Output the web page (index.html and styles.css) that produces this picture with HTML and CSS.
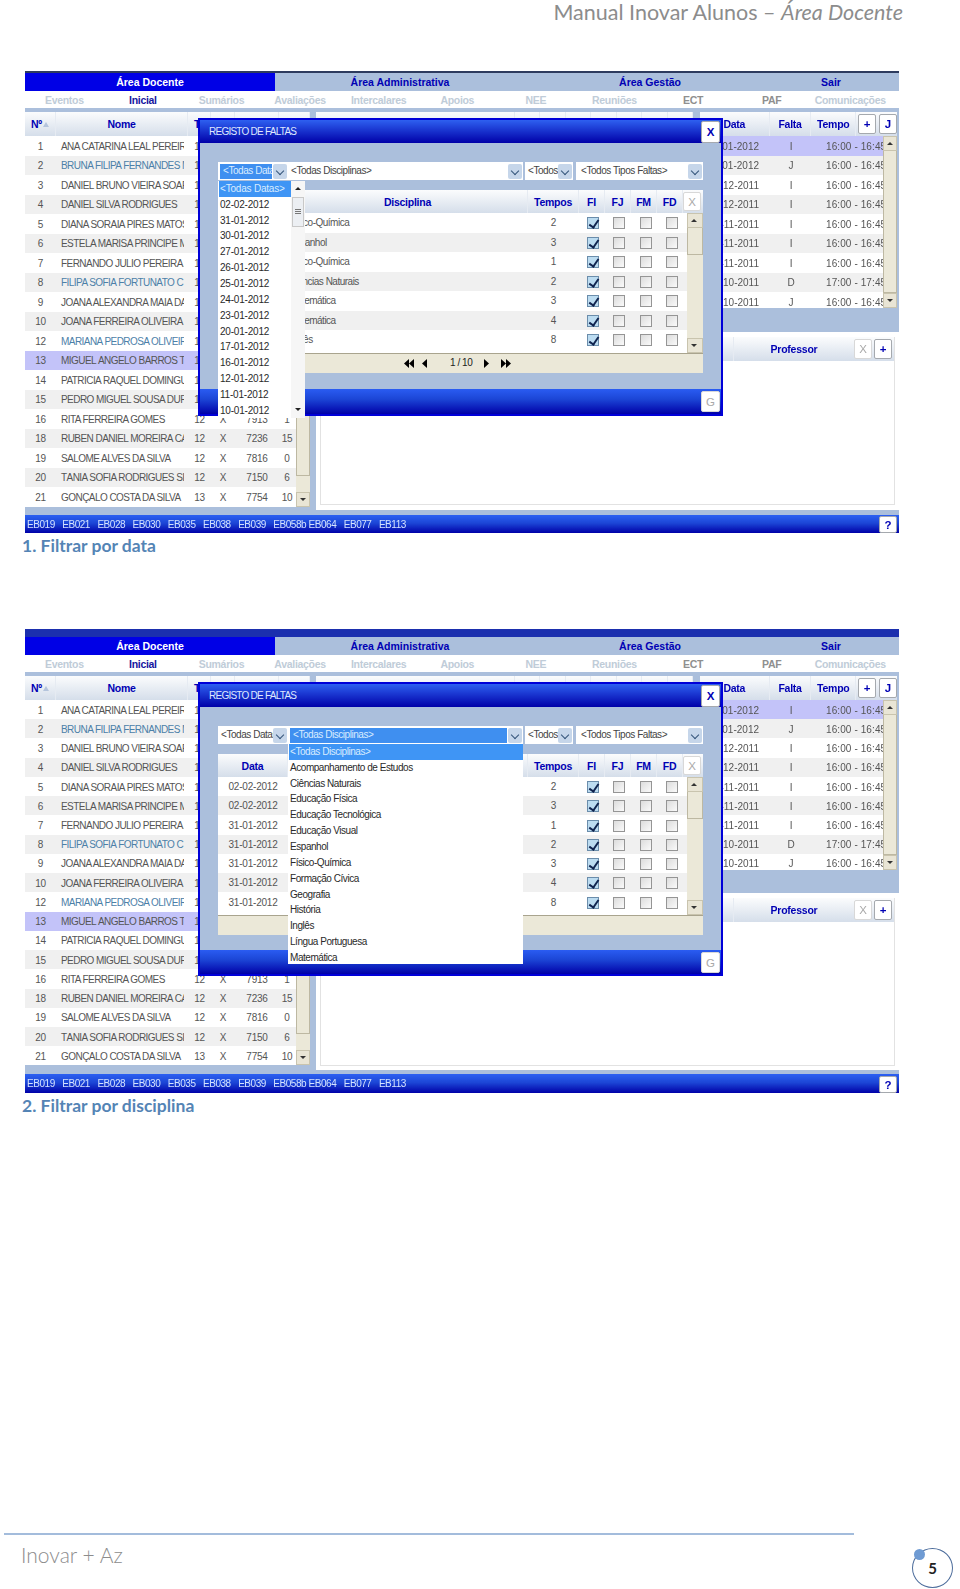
FILE: index.html
```html
<!DOCTYPE html>
<html lang="pt">
<head>
    <meta charset="UTF-8">
    <title>Manual Inovar Alunos - Área Docente</title>
    <link rel="stylesheet" href="styles.css">
</head>
<body>
<div class="page">
    <header class="doc-title">Manual Inovar Alunos – <em>Área Docente</em></header>

    <div class="app">
        <div class="strip"></div>
        <nav class="tabs"><a class="active">Área Docente</a><a>Área Administrativa</a><a>Área Gestão</a><a>Sair</a></nav>
        <nav class="submenu"><a>Eventos</a><a class="current">Inicial</a><a>Sumários</a><a>Avaliações</a><a>Intercalares</a><a>Apoios</a><a>NEE</a><a>Reuniões</a><a class="plain">ECT</a><a class="plain">PAF</a><a>Comunicações</a></nav>
        <div class="panels">
            <section class="students">
                <div class="head student-cols"><span>Nº<i class="sort"></i></span><span>Nome</span><span class="cut">Tu</span><span></span><span></span><span></span></div>
                <div class="scroll-area">
                    <div class="rows">
                        <div class="row student-cols"><span>1</span><span class="name">ANA CATARINA LEAL PEREIR</span><span>12</span></div>
                        <div class="row student-cols link"><span>2</span><span class="name">BRUNA FILIPA FERNANDES M</span><span>12</span></div>
                        <div class="row student-cols"><span>3</span><span class="name">DANIEL BRUNO VIEIRA SOAR</span><span>12</span></div>
                        <div class="row student-cols"><span>4</span><span class="name">DANIEL SILVA RODRIGUES</span><span>12</span></div>
                        <div class="row student-cols"><span>5</span><span class="name">DIANA SORAIA PIRES MATOS</span><span>12</span></div>
                        <div class="row student-cols"><span>6</span><span class="name">ESTELA MARISA PRÍNCIPE M</span><span>12</span></div>
                        <div class="row student-cols"><span>7</span><span class="name">FERNANDO JÚLIO PEREIRA A</span><span>12</span></div>
                        <div class="row student-cols link"><span>8</span><span class="name">FILIPA SOFIA FORTUNATO C</span><span>12</span></div>
                        <div class="row student-cols"><span>9</span><span class="name">JOANA ALEXANDRA MAIA DA</span><span>12</span></div>
                        <div class="row student-cols"><span>10</span><span class="name">JOANA FERREIRA OLIVEIRA</span><span>12</span></div>
                        <div class="row student-cols link"><span>12</span><span class="name">MARIANA PEDROSA OLIVEIR</span><span>12</span></div>
                        <div class="row student-cols selected"><span>13</span><span class="name">MIGUEL ÂNGELO BARROS TE</span><span>12</span></div>
                        <div class="row student-cols"><span>14</span><span class="name">PATRÍCIA RAQUEL DOMINGU</span><span>12</span></div>
                        <div class="row student-cols"><span>15</span><span class="name">PEDRO MIGUEL SOUSA DURÃ</span><span>12</span></div>
                        <div class="row student-cols"><span>16</span><span class="name">RITA FERREIRA GOMES</span><span>12</span><span>X</span><span>7913</span><span>1</span></div>
                        <div class="row student-cols"><span>18</span><span class="name">RUBEN DANIEL MOREIRA CAI</span><span>12</span><span>X</span><span>7236</span><span>15</span></div>
                        <div class="row student-cols"><span>19</span><span class="name">SALOMÉ ALVES DA SILVA</span><span>12</span><span>X</span><span>7816</span><span>0</span></div>
                        <div class="row student-cols"><span>20</span><span class="name">TÂNIA SOFIA RODRIGUES SI</span><span>12</span><span>X</span><span>7150</span><span>6</span></div>
                        <div class="row student-cols"><span>21</span><span class="name">GONÇALO COSTA DA SILVA</span><span>13</span><span>X</span><span>7754</span><span>10</span></div>
                    </div>
                    <div class="scrollbar"><i class="btn-up"></i><i class="thumb grow"></i><i class="track-gap"></i><i class="btn-down"></i></div>
                </div>
            </section>
            <section class="work">
                <div class="upper">
                    <div class="middle">
                        <div class="head mid-head"><span class="wide"></span><span></span><span></span><span></span><span></span><span></span><span></span><span></span></div>
                    </div>
                    <div class="absences">
                        <div class="head absence-head">
                            <span class="col-data">Data</span><span class="col-falta">Falta</span><span class="col-tempo">Tempo</span>
                            <button class="key">+</button><button class="key">J</button>
                        </div>
                        <div class="scroll-area">
                            <div class="rows">
                                <div class="row absence-cols selected"><span>-01-2012</span><span>I</span><span>16:00 - 16:45</span></div>
                                <div class="row absence-cols"><span>-01-2012</span><span>J</span><span>16:00 - 16:45</span></div>
                                <div class="row absence-cols"><span>-12-2011</span><span>I</span><span>16:00 - 16:45</span></div>
                                <div class="row absence-cols"><span>-12-2011</span><span>I</span><span>16:00 - 16:45</span></div>
                                <div class="row absence-cols"><span>-11-2011</span><span>I</span><span>16:00 - 16:45</span></div>
                                <div class="row absence-cols"><span>-11-2011</span><span>I</span><span>16:00 - 16:45</span></div>
                                <div class="row absence-cols"><span>-11-2011</span><span>I</span><span>16:00 - 16:45</span></div>
                                <div class="row absence-cols"><span>-10-2011</span><span>D</span><span>17:00 - 17:45</span></div>
                                <div class="row absence-cols"><span>-10-2011</span><span>J</span><span>16:00 - 16:45</span></div>
                            </div>
                            <div class="scrollbar"><i class="btn-up"></i><i class="thumb grow"></i><i class="btn-down"></i></div>
                        </div>
                    </div>
                </div>
                <div class="lower">
                    <div class="lower-inner">
                        <div class="head lower-head"><span class="wide"></span><span class="col-prof">Professor</span><button class="key off">X</button><button class="key">+</button></div>
                    </div>
                </div>
            </section>
        </div>
        <footer class="statusbar">
            <span>EB019</span><span>EB021</span><span>EB028</span><span>EB030</span><span>EB035</span><span>EB038</span><span>EB039</span><span>EB058b</span><span>EB064</span><span>EB077</span><span>EB113</span>
            <button class="key help">?</button>
        </footer>

        <div class="modal">
            <div class="modal-title"><span>REGISTO DE FALTAS</span><button class="key close">X</button></div>
            <div class="modal-body">
                <div class="filters">
                    <div class="select s-date"><span class="val focus">&lt;Todas Datas&gt;</span><i class="arrow"></i></div>
                    <div class="select s-disc"><span class="val">&lt;Todas Disciplinas&gt;</span><i class="arrow"></i></div>
                    <div class="select s-time"><span class="val">&lt;Todos&gt;</span><i class="arrow"></i></div>
                    <div class="select s-type"><span class="val">&lt;Todos Tipos Faltas&gt;</span><i class="arrow"></i></div>
                </div>
                <div class="head modal-cols"><span>Data</span><span>Disciplina</span><span>Tempos</span><span>FI</span><span>FJ</span><span>FM</span><span>FD</span><button class="key off">X</button></div>
                <div class="scroll-area modal-scroll">
                    <div class="rows">
                        <div class="row modal-cols"><span>02-02-2012</span><span class="subject">Físico-Química</span><span>2</span><span><i class="cb on"></i></span><span><i class="cb"></i></span><span><i class="cb"></i></span><span><i class="cb"></i></span></div>
                        <div class="row modal-cols"><span>02-02-2012</span><span class="subject">Espanhol</span><span>3</span><span><i class="cb on"></i></span><span><i class="cb"></i></span><span><i class="cb"></i></span><span><i class="cb"></i></span></div>
                        <div class="row modal-cols"><span>31-01-2012</span><span class="subject">Físico-Química</span><span>1</span><span><i class="cb on"></i></span><span><i class="cb"></i></span><span><i class="cb"></i></span><span><i class="cb"></i></span></div>
                        <div class="row modal-cols"><span>31-01-2012</span><span class="subject">Ciências Naturais</span><span>2</span><span><i class="cb on"></i></span><span><i class="cb"></i></span><span><i class="cb"></i></span><span><i class="cb"></i></span></div>
                        <div class="row modal-cols"><span>31-01-2012</span><span class="subject">Matemática</span><span>3</span><span><i class="cb on"></i></span><span><i class="cb"></i></span><span><i class="cb"></i></span><span><i class="cb"></i></span></div>
                        <div class="row modal-cols"><span>31-01-2012</span><span class="subject">Matemática</span><span>4</span><span><i class="cb on"></i></span><span><i class="cb"></i></span><span><i class="cb"></i></span><span><i class="cb"></i></span></div>
                        <div class="row modal-cols"><span>31-01-2012</span><span class="subject">Inglês</span><span>8</span><span><i class="cb on"></i></span><span><i class="cb"></i></span><span><i class="cb"></i></span><span><i class="cb"></i></span></div>
                    </div>
                    <div class="scrollbar"><i class="btn-up"></i><i class="thumb short"></i><i class="track-fill"></i><i class="btn-down"></i></div>
                </div>
                <div class="pager">
                    <svg width="10" height="9" viewBox="0 0 10 9"><path d="M5 0v9L0 4.5zM10 0v9L5 4.5z"/></svg>
                    <svg class="gap-s" width="5" height="9" viewBox="0 0 5 9"><path d="M5 0v9L0 4.5z"/></svg>
                    <b>1 / 10</b>
                    <svg width="5" height="9" viewBox="0 0 5 9"><path d="M0 0v9l5-4.5z"/></svg>
                    <svg class="gap-l" width="10" height="9" viewBox="0 0 10 9"><path d="M0 0v9l5-4.5zM5 0v9l5-4.5z"/></svg>
                </div>
            </div>
            <div class="modal-foot"><button class="key off">G</button></div>
            <div class="dropdown dates">
                <div class="list">
                    <a class="sel">&lt;Todas Datas&gt;</a><a>02-02-2012</a><a>31-01-2012</a><a>30-01-2012</a><a>27-01-2012</a><a>26-01-2012</a><a>25-01-2012</a><a>24-01-2012</a><a>23-01-2012</a><a>20-01-2012</a><a>17-01-2012</a><a>16-01-2012</a><a>12-01-2012</a><a>11-01-2012</a><a>10-01-2012</a>
                </div>
                <div class="mini-scroll"><i class="mini-up"></i><i class="mini-thumb"></i><i class="mini-down"></i></div>
            </div>
        </div>
    </div>
    <p class="caption">1. Filtrar por data</p>

    <div class="app app-2">
        <div class="strip"></div>
        <nav class="tabs"><a class="active">Área Docente</a><a>Área Administrativa</a><a>Área Gestão</a><a>Sair</a></nav>
        <nav class="submenu"><a>Eventos</a><a class="current">Inicial</a><a>Sumários</a><a>Avaliações</a><a>Intercalares</a><a>Apoios</a><a>NEE</a><a>Reuniões</a><a class="plain">ECT</a><a class="plain">PAF</a><a>Comunicações</a></nav>
        <div class="panels">
            <section class="students">
                <div class="head student-cols"><span>Nº<i class="sort"></i></span><span>Nome</span><span class="cut">Tu</span><span></span><span></span><span></span></div>
                <div class="scroll-area">
                    <div class="rows">
                        <div class="row student-cols"><span>1</span><span class="name">ANA CATARINA LEAL PEREIR</span><span>12</span></div>
                        <div class="row student-cols link"><span>2</span><span class="name">BRUNA FILIPA FERNANDES M</span><span>12</span></div>
                        <div class="row student-cols"><span>3</span><span class="name">DANIEL BRUNO VIEIRA SOAR</span><span>12</span></div>
                        <div class="row student-cols"><span>4</span><span class="name">DANIEL SILVA RODRIGUES</span><span>12</span></div>
                        <div class="row student-cols"><span>5</span><span class="name">DIANA SORAIA PIRES MATOS</span><span>12</span></div>
                        <div class="row student-cols"><span>6</span><span class="name">ESTELA MARISA PRÍNCIPE M</span><span>12</span></div>
                        <div class="row student-cols"><span>7</span><span class="name">FERNANDO JÚLIO PEREIRA A</span><span>12</span></div>
                        <div class="row student-cols link"><span>8</span><span class="name">FILIPA SOFIA FORTUNATO C</span><span>12</span></div>
                        <div class="row student-cols"><span>9</span><span class="name">JOANA ALEXANDRA MAIA DA</span><span>12</span></div>
                        <div class="row student-cols"><span>10</span><span class="name">JOANA FERREIRA OLIVEIRA</span><span>12</span></div>
                        <div class="row student-cols link"><span>12</span><span class="name">MARIANA PEDROSA OLIVEIR</span><span>12</span></div>
                        <div class="row student-cols selected"><span>13</span><span class="name">MIGUEL ÂNGELO BARROS TE</span><span>12</span></div>
                        <div class="row student-cols"><span>14</span><span class="name">PATRÍCIA RAQUEL DOMINGU</span><span>12</span></div>
                        <div class="row student-cols"><span>15</span><span class="name">PEDRO MIGUEL SOUSA DURÃ</span><span>12</span></div>
                        <div class="row student-cols"><span>16</span><span class="name">RITA FERREIRA GOMES</span><span>12</span><span>X</span><span>7913</span><span>1</span></div>
                        <div class="row student-cols"><span>18</span><span class="name">RUBEN DANIEL MOREIRA CAI</span><span>12</span><span>X</span><span>7236</span><span>15</span></div>
                        <div class="row student-cols"><span>19</span><span class="name">SALOMÉ ALVES DA SILVA</span><span>12</span><span>X</span><span>7816</span><span>0</span></div>
                        <div class="row student-cols"><span>20</span><span class="name">TÂNIA SOFIA RODRIGUES SI</span><span>12</span><span>X</span><span>7150</span><span>6</span></div>
                        <div class="row student-cols"><span>21</span><span class="name">GONÇALO COSTA DA SILVA</span><span>13</span><span>X</span><span>7754</span><span>10</span></div>
                    </div>
                    <div class="scrollbar"><i class="btn-up"></i><i class="thumb grow"></i><i class="track-gap"></i><i class="btn-down"></i></div>
                </div>
            </section>
            <section class="work">
                <div class="upper">
                    <div class="middle">
                        <div class="head mid-head"><span class="wide"></span><span></span><span></span><span></span><span></span><span></span><span></span><span></span></div>
                    </div>
                    <div class="absences">
                        <div class="head absence-head">
                            <span class="col-data">Data</span><span class="col-falta">Falta</span><span class="col-tempo">Tempo</span>
                            <button class="key">+</button><button class="key">J</button>
                        </div>
                        <div class="scroll-area">
                            <div class="rows">
                                <div class="row absence-cols selected"><span>-01-2012</span><span>I</span><span>16:00 - 16:45</span></div>
                                <div class="row absence-cols"><span>-01-2012</span><span>J</span><span>16:00 - 16:45</span></div>
                                <div class="row absence-cols"><span>-12-2011</span><span>I</span><span>16:00 - 16:45</span></div>
                                <div class="row absence-cols"><span>-12-2011</span><span>I</span><span>16:00 - 16:45</span></div>
                                <div class="row absence-cols"><span>-11-2011</span><span>I</span><span>16:00 - 16:45</span></div>
                                <div class="row absence-cols"><span>-11-2011</span><span>I</span><span>16:00 - 16:45</span></div>
                                <div class="row absence-cols"><span>-11-2011</span><span>I</span><span>16:00 - 16:45</span></div>
                                <div class="row absence-cols"><span>-10-2011</span><span>D</span><span>17:00 - 17:45</span></div>
                                <div class="row absence-cols"><span>-10-2011</span><span>J</span><span>16:00 - 16:45</span></div>
                            </div>
                            <div class="scrollbar"><i class="btn-up"></i><i class="thumb grow"></i><i class="btn-down"></i></div>
                        </div>
                    </div>
                </div>
                <div class="lower">
                    <div class="lower-inner">
                        <div class="head lower-head"><span class="wide"></span><span class="col-prof">Professor</span><button class="key off">X</button><button class="key">+</button></div>
                    </div>
                </div>
            </section>
        </div>
        <footer class="statusbar">
            <span>EB019</span><span>EB021</span><span>EB028</span><span>EB030</span><span>EB035</span><span>EB038</span><span>EB039</span><span>EB058b</span><span>EB064</span><span>EB077</span><span>EB113</span>
            <button class="key help">?</button>
        </footer>

        <div class="modal">
            <div class="modal-title"><span>REGISTO DE FALTAS</span><button class="key close">X</button></div>
            <div class="modal-body">
                <div class="filters">
                    <div class="select s-date"><span class="val">&lt;Todas Datas&gt;</span><i class="arrow"></i></div>
                    <div class="select s-disc"><span class="val focus">&lt;Todas Disciplinas&gt;</span><i class="arrow"></i></div>
                    <div class="select s-time"><span class="val">&lt;Todos&gt;</span><i class="arrow"></i></div>
                    <div class="select s-type"><span class="val">&lt;Todos Tipos Faltas&gt;</span><i class="arrow"></i></div>
                </div>
                <div class="head modal-cols"><span>Data</span><span>Disciplina</span><span>Tempos</span><span>FI</span><span>FJ</span><span>FM</span><span>FD</span><button class="key off">X</button></div>
                <div class="scroll-area modal-scroll">
                    <div class="rows">
                        <div class="row modal-cols"><span>02-02-2012</span><span class="subject">Físico-Química</span><span>2</span><span><i class="cb on"></i></span><span><i class="cb"></i></span><span><i class="cb"></i></span><span><i class="cb"></i></span></div>
                        <div class="row modal-cols"><span>02-02-2012</span><span class="subject">Espanhol</span><span>3</span><span><i class="cb on"></i></span><span><i class="cb"></i></span><span><i class="cb"></i></span><span><i class="cb"></i></span></div>
                        <div class="row modal-cols"><span>31-01-2012</span><span class="subject">Físico-Química</span><span>1</span><span><i class="cb on"></i></span><span><i class="cb"></i></span><span><i class="cb"></i></span><span><i class="cb"></i></span></div>
                        <div class="row modal-cols"><span>31-01-2012</span><span class="subject">Ciências Naturais</span><span>2</span><span><i class="cb on"></i></span><span><i class="cb"></i></span><span><i class="cb"></i></span><span><i class="cb"></i></span></div>
                        <div class="row modal-cols"><span>31-01-2012</span><span class="subject">Matemática</span><span>3</span><span><i class="cb on"></i></span><span><i class="cb"></i></span><span><i class="cb"></i></span><span><i class="cb"></i></span></div>
                        <div class="row modal-cols"><span>31-01-2012</span><span class="subject">Matemática</span><span>4</span><span><i class="cb on"></i></span><span><i class="cb"></i></span><span><i class="cb"></i></span><span><i class="cb"></i></span></div>
                        <div class="row modal-cols"><span>31-01-2012</span><span class="subject">Inglês</span><span>8</span><span><i class="cb on"></i></span><span><i class="cb"></i></span><span><i class="cb"></i></span><span><i class="cb"></i></span></div>
                    </div>
                    <div class="scrollbar"><i class="btn-up"></i><i class="thumb short"></i><i class="track-fill"></i><i class="btn-down"></i></div>
                </div>
                <div class="pager"></div>
            </div>
            <div class="modal-foot"><button class="key off">G</button></div>
            <div class="dropdown subjects">
                <div class="list">
                    <a class="sel">&lt;Todas Disciplinas&gt;</a><a>Acompanhamento de Estudos</a><a>Ciências Naturais</a><a>Educação Física</a><a>Educação Tecnológica</a><a>Educação Visual</a><a>Espanhol</a><a>Físico-Química</a><a>Formação Cívica</a><a>Geografia</a><a>História</a><a>Inglês</a><a>Língua Portuguesa</a><a>Matemática</a>
                </div>
            </div>
        </div>
    </div>
    <p class="caption">2. Filtrar por disciplina</p>

    <footer class="doc-foot">
        <span class="brand">Inovar + Az</span>
        <div class="page-no"><i class="dot"></i>5</div>
    </footer>
</div>
</body>
</html>
```

FILE: styles.css
```css
:root {
    --ui: "Liberation Sans", Arial, sans-serif;
    --doc: Lato, "Open Sans", sans-serif;
    --steel: #abbfdc;
    --navy: #0000b4;
    --beige: #ebe8d8;
}

* {
    margin: 0;
    padding: 0;
    box-sizing: border-box;
}

body {
    background: white;
}

.page {
    position: relative;
    height: 1589px;
    display: flex;
    flex-direction: column;
    font-family: var(--doc);
}

.doc-title {
    height: 71px;
    padding-right: 57px;
    text-align: right;
    font-size: 21.5px;
    line-height: 25px;
    color: #8c8c8c;
}

.caption {
    margin-left: 22px;
    height: 26px;
    line-height: 26px;
    font-size: 17.5px;
    font-weight: 700;
    color: #5484b5;
}

.doc-foot {
    margin-top: auto;
    margin-left: 4px;
    width: 850px;
    height: 56px;
    border-top: 2px solid #a3bcdc;
    padding: 7px 0 0 17px;
    position: relative;
}

.brand {
    font-size: 21px;
    font-weight: 300;
    color: #8c8c8c;
}

.page-no {
    position: absolute;
    left: 908px;
    top: 13px;
    width: 41px;
    height: 40px;
    border: 1px solid #4d6d9c;
    border-radius: 50%;
    display: flex;
    align-items: center;
    justify-content: center;
    font: 700 15px var(--doc);
    color: #222;
}

.dot {
    position: absolute;
    left: 1px;
    top: 0;
    width: 11px;
    height: 11px;
    border-radius: 50%;
    background: #6f9bd3;
}

/* the application screenshot */

.app {
    --row: 19.5px;
    --absence-body: 172px;
    position: relative;
    margin-left: 25px;
    width: 874px;
    height: 462px;
    display: flex;
    flex-direction: column;
    font: 10px/1 var(--ui);
    letter-spacing: -0.45px;
    color: #555;
    background: var(--steel);
    filter: blur(0.35px);
}

.app-2 {
    --row: 19.24px;
    --absence-body: 170px;
    margin-top: 70px;
    height: 464px;
}

.strip {
    height: 2px;
    background: #2d3b5e;
}

.app-2 .strip {
    height: 8px;
    background: #1b2fae;
}

.tabs {
    height: 18px;
    display: grid;
    grid-template-columns: 250px 250px 250px 112px;
    align-items: stretch;
    background: var(--steel);
    font-size: 10.5px;
    font-weight: 700;
    letter-spacing: 0;
    color: var(--navy);
}

.tabs a {
    display: flex;
    align-items: center;
    justify-content: center;
    padding-top: 1px;
}

.tabs .active {
    background: #0000e6;
    color: white;
}

.submenu {
    height: 17px;
    display: grid;
    grid-template-columns: repeat(11, 78.6px);
    background: white;
    font-size: 10.5px;
    font-weight: 700;
    letter-spacing: -0.3px;
    color: #c0ccd8;
}

.submenu a {
    display: flex;
    align-items: center;
    justify-content: center;
    padding-top: 1px;
}

.submenu .current {
    color: #1616a0;
}

.submenu .plain {
    color: #8f8f8f;
}

.panels {
    flex: 1;
    margin-top: 4px;
    display: grid;
    grid-template-columns: 285px 1fr;
    column-gap: 6px;
    min-height: 0;
}

.head {
    height: 24px;
    background: linear-gradient(#fbfcfd, #d5deea);
    color: var(--navy);
    font-size: 10.5px;
    font-weight: 700;
    letter-spacing: -0.25px;
    align-items: center;
}

.head > span {
    height: 100%;
    padding-top: 1px;
    display: flex;
    align-items: center;
    justify-content: center;
    border-right: 1px solid #e6ebf2;
}

.scroll-area {
    display: flex;
}

.rows {
    flex: 1;
    min-width: 0;
}

.row {
    height: var(--row);
    align-items: center;
    padding-top: 2px;
    background: white;
    overflow: hidden;
}

.modal-body .row {
    padding-top: 1px;
}

.row:nth-child(even) {
    background: #f0f0f0;
}

.row.selected {
    background: #c3c3f9;
}

.row.link .name {
    color: #4c80a8;
}

.row > span {
    text-align: center;
    white-space: nowrap;
    letter-spacing: -0.2px;
}

/* left list of students */

.students {
    display: flex;
    flex-direction: column;
}

.student-cols {
    display: grid;
    grid-template-columns: 31px 132px 23px 24px 44px 31px;
}

.students .row.student-cols {
    grid-template-columns: 31px 132px 23px 24px 44px 16px;
}

.sort {
    width: 0;
    height: 0;
    margin-left: 1px;
    border: 3px solid transparent;
    border-top: 0;
    border-bottom: 5px solid #b4c4dc;
}

.head .cut {
    justify-content: flex-start;
    padding-left: 6px;
}

.row > .name {
    text-align: left;
    padding-left: 5px;
    margin-right: 4px;
    overflow: hidden;
    letter-spacing: -0.55px;
}

/* scrollbars */

.scrollbar {
    width: 14px;
    flex: none;
    display: flex;
    flex-direction: column;
    background: var(--beige);
}

.scrollbar i {
    display: block;
}

.btn-up,
.btn-down {
    position: relative;
    height: 15px;
    flex: none;
    background: #e9e5d5;
    border: 1px solid #c9c4ae;
}

.btn-up::after,
.btn-down::after {
    content: "";
    position: absolute;
    left: 3px;
    top: 5px;
    border: 3px solid transparent;
    border-top: 0;
    border-bottom: 3px solid #333;
}

.btn-down::after {
    border-bottom: 0;
    border-top: 3px solid #333;
}

.thumb {
    border: 1px solid #bdb8a2;
    border-top: 0;
    background: var(--beige);
}

.thumb.grow {
    flex: 1;
}

.thumb.short {
    height: 27px;
}

.track-gap {
    height: 16px;
    flex: none;
}

.track-fill {
    flex: 1;
}

/* right side of the window */

.work {
    display: flex;
    flex-direction: column;
}

.upper {
    display: grid;
    grid-template-columns: 377px 197px;
    column-gap: 7px;
}

.middle {
    background: white;
}

.mid-head {
    display: flex;
}

.mid-head span {
    width: 25.5px;
}

.mid-head .wide {
    flex: 1;
}

.absence-head {
    display: flex;
}

.absences .scroll-area {
    height: var(--absence-body);
    overflow: hidden;
}

.col-data {
    width: 70px;
}

.col-falta {
    width: 42px;
}

.col-tempo {
    width: 45px;
}

.absence-cols {
    display: grid;
    grid-template-columns: 70px 42px 1fr;
}

.absence-cols span:first-child {
    text-align: right;
    padding-right: 11px;
    letter-spacing: 0;
}

.absence-cols span:last-child {
    text-align: left;
    padding-left: 14px;
    overflow: hidden;
    letter-spacing: 0.1px;
}

.key {
    height: 20px;
    width: 18px;
    border: 1px solid #a5a9ae;
    border-radius: 2px;
    background: white;
    color: var(--navy);
    font: 700 11.5px var(--ui);
}

.key.off {
    color: #a9a9a9;
    border-color: #d8d8d8;
    font-weight: 400;
}

.absence-head .key {
    margin-left: 2px;
}

.absence-head .key:last-child {
    margin-left: 3px;
}

.lower {
    flex: none;
    margin-top: 24px;
    height: 178px;
    margin-right: 1px;
    background: white;
    padding: 5px 4px 0 4px;
}

.app-2 .lower {
    margin-top: 23px;
    height: 177px;
}

.lower-inner {
    height: 168px;
    border: 1px solid #e2e2e2;
    border-top: 0;
}

.lower-head {
    display: flex;
}

.lower-head .wide {
    width: 413px;
}

.col-prof {
    width: 120px;
    border: 0 !important;
}

.lower-head .key {
    margin-right: 2px;
}

.statusbar {
    flex: none;
    height: 18px;
    margin-top: 8px;
    padding-left: 2px;
    display: flex;
    align-items: center;
    background: linear-gradient(#2c60f2, #1c46d6 45%, #0000a8);
    color: #d4e2ff;
}

.statusbar span {
    width: 35.2px;
    padding-top: 1px;
}

.app-2 .statusbar {
    height: 19px;
}

.help {
    margin-left: auto;
    margin-right: 2px;
    height: 17px;
    align-self: flex-end;
}

/* modal window */

.modal {
    position: absolute;
    left: 173px;
    top: 47px;
    width: 525px;
    height: 298px;
    border: 2px solid #0000d8;
    display: flex;
    flex-direction: column;
    background: var(--steel);
}

.app-2 .modal {
    top: 53px;
    height: 294px;
}

.modal-title {
    flex: none;
    height: 23px;
    padding-left: 9px;
    display: flex;
    align-items: center;
    justify-content: space-between;
    background: linear-gradient(#2e60f0, #0000a8);
    color: #dfe8ff;
    letter-spacing: -0.75px;
}

.close {
    height: 22px;
    width: 19px;
    margin-right: 1px;
}

.modal-body {
    flex: 1;
    padding: 19px 18px 0;
}

.filters {
    display: flex;
    height: 18px;
    margin-bottom: 10px;
}

.select {
    display: flex;
    align-items: center;
    background: white;
    padding-right: 1px;
    color: #444;
}

.s-date { width: 70px; }
.s-disc { width: 235px; }
.s-time { width: 48px; margin-left: 2px; }
.s-type { width: 127px; margin-left: 3px; }

.val {
    flex: 1;
    min-width: 0;
    height: 100%;
    padding-left: 3px;
    display: flex;
    align-items: center;
    white-space: nowrap;
    overflow: hidden;
}

.s-type .val {
    padding-left: 5px;
}

.val.focus {
    margin: 1px 1px 1px 2px;
    height: 15px;
    background: #3f8ff0;
    color: #d9ecff;
}

.arrow {
    position: relative;
    flex: none;
    width: 14px;
    height: 15px;
    background: #c6d6ea;
    border-radius: 2px;
}

.arrow::after {
    content: "";
    position: absolute;
    left: 4px;
    top: 4px;
    width: 5px;
    height: 5px;
    border-right: 1.5px solid #34547a;
    border-bottom: 1.5px solid #34547a;
    transform: rotate(45deg);
}

.modal-cols {
    display: grid;
    grid-template-columns: 70px 240px 51px 26px 26px 26px 26px 20px;
}

.modal-body .head {
    height: 23px;
}

.modal-body .head .key {
    height: 19px;
}

.modal-body .row.modal-cols {
    grid-template-columns: 70px 240px 51px 26.5px 26.5px 26.5px 26.5px;
}

.row > .subject {
    text-align: left;
    padding-left: 1px;
    letter-spacing: -0.5px;
}

.modal-scroll {
    background: white;
}

.modal-scroll .rows {
    padding-bottom: 3px;
}

.modal-scroll .scrollbar {
    width: 16px;
}

.cb {
    display: inline-block;
    position: relative;
    width: 12px;
    height: 12px;
    margin-left: 1px;
    vertical-align: middle;
    border: 1px solid #959595;
    background: linear-gradient(135deg, #dcdcdc, #fafafa);
}

.cb.on {
    border-color: #6b8dab;
    background: #bcdcf1;
}

.cb.on::after {
    content: "";
    position: absolute;
    left: 3px;
    top: 0;
    width: 4px;
    height: 8px;
    border-right: 2px solid #10244f;
    border-bottom: 2px solid #10244f;
    transform: rotate(35deg);
}

.pager {
    height: 20px;
    border-top: 1px solid #a9a48e;
    background: var(--beige);
    display: flex;
    align-items: center;
    padding-left: 186px;
    color: #222;
}

.pager b {
    width: 24px;
    margin: 0 10px 0 23px;
    font-weight: 400;
    white-space: nowrap;
}

.pager .gap-s {
    margin-left: 8px;
}

.pager .gap-l {
    margin-left: 12px;
}

.modal-foot {
    flex: none;
    height: 25px;
    padding: 2px 1px 0 0;
    display: flex;
    justify-content: flex-end;
    background: linear-gradient(#2a5cf2, #1c46d6 40%, #0000a8);
}

.app-2 .modal-foot {
    height: 24px;
}

.modal-foot .key {
    width: 19px;
    height: 21px;
}

/* open select lists */

.dropdown {
    position: absolute;
    display: flex;
    background: white;
    color: #2a2a2a;
}

.dates {
    left: 18px;
    top: 61px;
    width: 87px;
    height: 237px;
    letter-spacing: -0.2px;
}

.subjects {
    left: 88px;
    top: 60px;
    width: 235px;
    height: 220px;
}

.list {
    flex: 1;
    min-width: 0;
    padding-left: 1px;
}

.list a {
    display: flex;
    align-items: center;
    height: 15.85px;
    padding-left: 1px;
    white-space: nowrap;
}

.list .sel {
    background: #3f95f5;
    color: #d9ecff;
}

.mini-scroll {
    width: 14px;
    flex: none;
    display: flex;
    flex-direction: column;
    background: #f6f6f6;
}

.mini-scroll i {
    display: block;
    flex: none;
}

.mini-up,
.mini-down {
    height: 16px;
    position: relative;
}

.mini-up::after,
.mini-down::after {
    content: "";
    position: absolute;
    left: 4px;
    top: 6px;
    border: 3px solid transparent;
    border-top: 0;
    border-bottom: 3px solid #222;
}

.mini-down::after {
    border-bottom: 0;
    border-top: 3px solid #222;
}

.mini-thumb {
    height: 30px;
    margin-left: 1px;
    width: 12px;
    border: 1px solid #c8c8c8;
    background: linear-gradient(#777, #777) center 11px / 6px 1px no-repeat,
                linear-gradient(#777, #777) center 13px / 6px 1px no-repeat,
                linear-gradient(#777, #777) center 15px / 6px 1px no-repeat,
                #eceff3;
}

.mini-down {
    margin-top: auto;
}
```
